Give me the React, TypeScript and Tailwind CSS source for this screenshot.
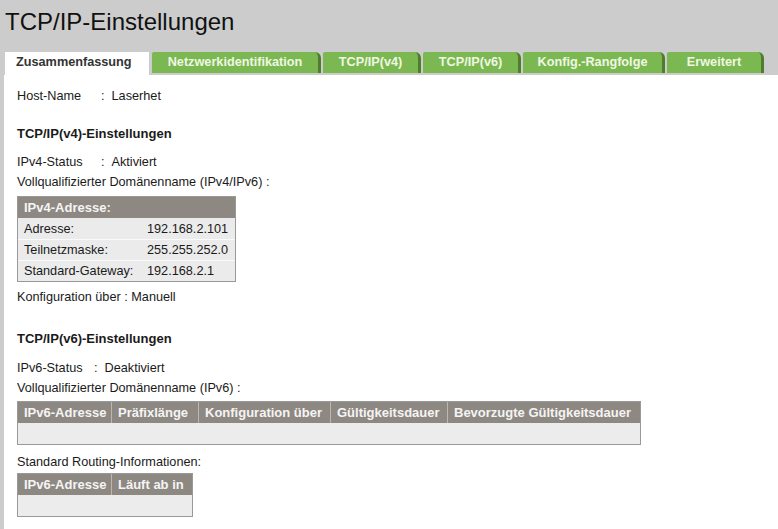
import type { ReactNode } from 'react';

type Tab = { label: string; width: string; active?: boolean };

const tabs: Tab[] = [
  { label: 'Zusammenfassung', width: 'w-[144px]', active: true },
  { label: 'Netzwerkidentifikation', width: 'w-[169px]' },
  { label: 'TCP/IP(v4)', width: 'w-[98px]' },
  { label: 'TCP/IP(v6)', width: 'w-[98px]' },
  { label: 'Konfig.-Rangfolge', width: 'w-[142px]' },
  { label: 'Erweitert', width: 'w-[97px]' },
];

const ipv4Rows = [
  { label: 'Adresse:', value: '192.168.2.101' },
  { label: 'Teilnetzmaske:', value: '255.255.252.0' },
  { label: 'Standard-Gateway:', value: '192.168.2.1' },
];

const ipv6Columns = [
  { label: 'IPv6-Adresse', width: 'w-[93px]' },
  { label: 'Präfixlänge', width: 'w-[87px]' },
  { label: 'Konfiguration über', width: 'w-[132px]' },
  { label: 'Gültigkeitsdauer', width: 'w-[117px]' },
  { label: 'Bevorzugte Gültigkeitsdauer', width: 'w-[193px]' },
];

const routeColumns = [
  { label: 'IPv6-Adresse', width: 'w-[93px]' },
  { label: 'Läuft ab in', width: 'w-[81px]' },
];

function TabBar() {
  return (
    <div className="flex h-[23px] items-start gap-[2px] pl-[5px]">
      {tabs.map((tab) =>
        tab.active ? (
          <div
            key={tab.label}
            className={`${tab.width} mr-[1px] h-[23px] bg-white pl-[11px] pt-[1px] text-[12.7px] font-bold leading-[18px] text-[#333]`}
          >
            {tab.label}
          </div>
        ) : (
          <div
            key={tab.label}
            className={`${tab.width} h-[21px] rounded-tl-[2px] rounded-tr-[6px] border-r-[3px] border-[#4f7d2d] bg-[#7cb852] pt-[1px] text-center text-[12.7px] font-bold leading-[18px] text-[#eef7e2]`}
          >
            {tab.label}
          </div>
        ),
      )}
    </div>
  );
}

function Field({ label, value, labelWidth }: { label: string; value: string; labelWidth: string }) {
  return (
    <div className="flex h-[20px] items-center">
      <span className={`${labelWidth} shrink-0`}>{label}</span>
      <span>:</span>
      <span className="ml-[7px]">{value}</span>
    </div>
  );
}

function Heading({ children, className }: { children: ReactNode; className: string }) {
  return <div className={`h-[20px] text-[13px] font-bold leading-[20px] ${className}`}>{children}</div>;
}

// header row plus one empty body row, like the device shows when a list has no entries
function GridTable({ columns, className }: { columns: { label: string; width: string }[]; className: string }) {
  return (
    <div className={`inline-flex flex-col border border-[#999] ${className}`}>
      <div className="flex h-[21px] bg-[#8e8882]">
        {columns.map((col, idx) => (
          <div
            key={col.label}
            className={`${col.width} shrink-0 whitespace-nowrap pl-[6px] text-[13px] font-bold leading-[21px] text-[#f4f4f4] ${
              idx > 0 ? 'border-l border-[#bcb7b1]' : ''
            }`}
          >
            {col.label}
          </div>
        ))}
      </div>
      <div className="h-[21px] bg-[#ececec]" />
    </div>
  );
}

export default function App() {
  return (
    <div className="min-h-[529px] bg-[#cccccc] font-['Liberation_Sans',Arial,sans-serif] text-[#1a1a1a]">
      <h1 className="h-[52px] pl-[5px] pt-[8px] text-[24px] leading-[28px] text-[#111]">TCP/IP-Einstellungen</h1>
      <TabBar />

      <div className="ml-[4px] min-h-[454px] bg-white pl-[13px] pt-[11px] text-[12.7px] leading-[20px]">
        <Field label="Host-Name" value="Laserhet" labelWidth="w-[84px]" />

        <Heading className="mt-[18px]">TCP/IP(v4)-Einstellungen</Heading>
        <div className="mt-[8px]">
          <Field label="IPv4-Status" value="Aktiviert" labelWidth="w-[84px]" />
        </div>
        <div>Vollqualifizierter Domänenname (IPv4/IPv6) :</div>

        <div className="mt-[4px] w-[219px] border border-[#999] bg-[#ebebeb]">
          <div className="h-[21px] bg-[#8e8882] px-[6px] text-[13px] font-bold leading-[21px] text-[#f4f4f4]">
            IPv4-Adresse:
          </div>
          {ipv4Rows.map((row, idx) => (
            <div
              key={row.label}
              className={`flex h-[21px] items-center px-[6px] ${idx > 0 ? 'border-t border-[#fafafa]' : ''}`}
            >
              <span className="w-[123px]">{row.label}</span>
              <span>{row.value}</span>
            </div>
          ))}
        </div>

        <div className="mt-[5px]">Konfiguration über : Manuell</div>

        <Heading className="mt-[22px]">TCP/IP(v6)-Einstellungen</Heading>
        <div className="mt-[9px]">
          <Field label="IPv6-Status" value="Deaktiviert" labelWidth="w-[77px]" />
        </div>
        <div>Vollqualifizierter Domänenname (IPv6) :</div>

        <GridTable columns={ipv6Columns} className="mt-[3px]" />

        <div className="mt-[7px]">Standard Routing-Informationen:</div>
        <GridTable columns={routeColumns} className="mt-[1px]" />
      </div>
    </div>
  );
}
